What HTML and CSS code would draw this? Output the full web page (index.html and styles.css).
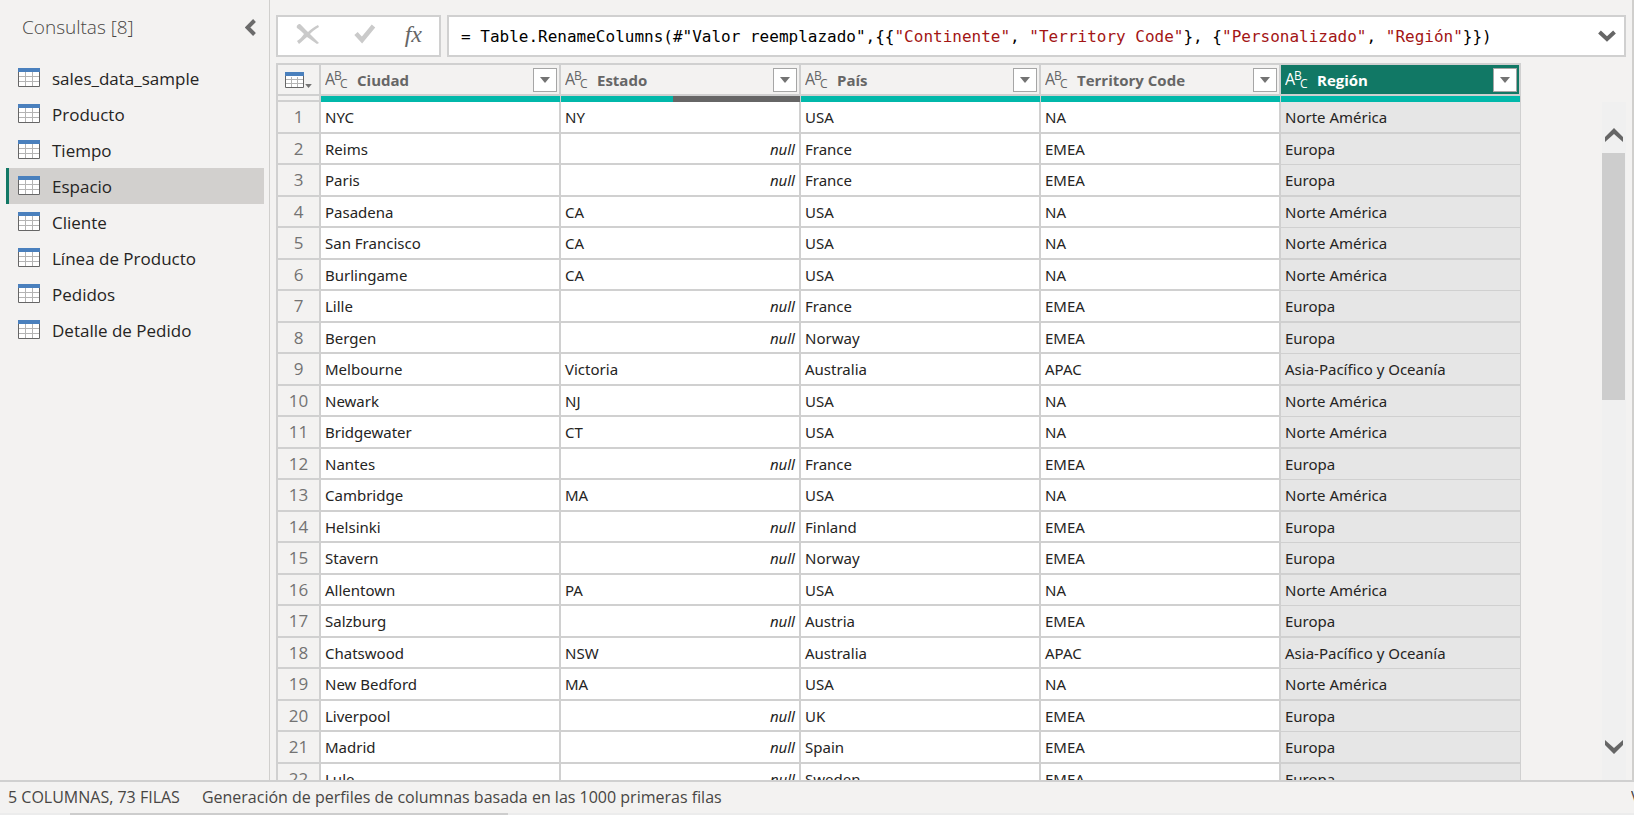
FILE: index.html
```html
<!DOCTYPE html>
<html lang="es">
<head>
<meta charset="utf-8">
<title>Editor de consultas</title>
<link rel="stylesheet" href="styles.css">
</head>
<body>
<svg class="defs" aria-hidden="true">
  <symbol id="table-icon" viewBox="0 0 22 19">
    <path fill="#fff" d="M0 0h22v19H0z"/>
    <path fill="none" stroke="#b4b4b4" d="M7.500 4v14M14.500 4v14M1 8.500h20M1 13.500h20"/>
    <path fill="none" stroke="#666" d="M.5 3.500v15h21v-15"/>
    <path fill="#4a80bd" d="M0 0h22v4H0z"/>
  </symbol>
  <symbol id="table-icon-small" viewBox="0 0 19 16">
    <path fill="#fff" d="M0 0h19v16H0z"/>
    <path fill="none" stroke="#b4b4b4" d="M6.500 5v10M12.500 5v10M1 7.500h17M1 11.500h17"/>
    <path fill="none" stroke="#666" d="M.5 3.500v12h18v-12"/>
    <path fill="#4a80bd" d="M0 0h19v4H0z"/>
  </symbol>
  <symbol id="drop-icon" viewBox="0 0 10 6"><path d="M0 0h10L5 6z"/></symbol>
</svg>
<div class="app">
  <div class="workspace">
    <aside class="sidebar">
      <header class="sidebar-head">
        <h1>Consultas [8]</h1>
        <button class="plain collapse" aria-label="Contraer"><svg width="11" height="17" viewBox="0 0 11 17"><path d="M9.500 1.500 2.500 8.500l7 7" fill="none" stroke="#6b6b6b" stroke-width="4"/></svg></button>
      </header>
      <nav class="queries" id="queries"></nav>
    </aside>
    <main class="main">
      <div class="formula-row">
        <div class="formula-actions">
          <button class="plain" aria-label="Cancelar"><svg width="24" height="21" viewBox="0 0 24 21"><path fill="#cacaca" d="M4 0C7 3 9 5 12 8C15 5 18 3 22 1L23 3C19 5 16 8 14 10C17 13 20 16 23 19L21 20C17 17 14 15 11 13C8 15 6 18 3 20L1 17C4 15 6 13 8 10C6 8 4 6 1 4C0 2 2 0 4 0Z"/></svg></button>
          <button class="plain accept" aria-label="Aceptar"><svg width="22" height="20" viewBox="0 0 22 20"><path d="M2 9.500 8 16 19.500 2" fill="none" stroke="#cacaca" stroke-width="4.500"/></svg></button>
          <button class="plain fx" aria-label="Insertar paso">fx</button>
        </div>
        <div class="formula">
          <code class="formula-text" role="textbox" aria-label="Barra de fórmulas" contenteditable="true" spellcheck="false">= Table.RenameColumns(#"Valor reemplazado",{{<span class="str">"Continente"</span>, <span class="str">"Territory Code"</span>}, {<span class="str">"Personalizado"</span>, <span class="str">"Región"</span>}})</code>
          <button class="plain expand" aria-label="Expandir"><svg width="18" height="12" viewBox="0 0 18 12"><path d="M1.500 2 9 9l7.500-7" fill="none" stroke="#666" stroke-width="4"/></svg></button>
        </div>
      </div>
      <div class="grid-area">
        <div class="grid-clip">
          <table class="grid">
            <colgroup><col class="col-index"><col class="col-data"><col class="col-data"><col class="col-data"><col class="col-data"><col class="col-data"></colgroup>
            <thead>
              <tr class="titles" id="titles"></tr>
              <tr class="quality" id="quality"></tr>
            </thead>
            <tbody id="rows"></tbody>
          </table>
        </div>
        <div class="scrollbar">
          <button class="plain step" aria-label="Subir"><svg width="18" height="14" viewBox="0 0 18 14"><path d="M0 9 9 0l9 9v5L9 6l-9 8z" fill="#666"/></svg></button>
          <div class="track"><div class="thumb"></div></div>
          <button class="plain step" aria-label="Bajar"><svg width="18" height="14" viewBox="0 0 18 14"><path d="M0 5 9 14l9-9V0L9 8 0 0z" fill="#666"/></svg></button>
        </div>
      </div>
    </main>
  </div>
  <footer class="status">
    <span>5 COLUMNAS, 73 FILAS</span>
    <span>Generación de perfiles de columnas basada en las 1000 primeras filas</span>
    <span class="status-end">V</span>
  </footer>
  <div class="hscroll"><div class="hthumb"></div></div>
</div>
<script src="app.js"></script>
</body>
</html>
```
FILE: app.js
```js
const queries = ["sales_data_sample", "Producto", "Tiempo", "Espacio", "Cliente", "Línea de Producto", "Pedidos", "Detalle de Pedido"];
const columns = ["Ciudad", "Estado", "País", "Territory Code", "Región"];
const regions = { NA: "Norte América", EMEA: "Europa", APAC: "Asia-Pacífico y Oceanía" };
const data = [
  ["NYC", "NY", "USA", "NA"],
  ["Reims", null, "France", "EMEA"],
  ["Paris", null, "France", "EMEA"],
  ["Pasadena", "CA", "USA", "NA"],
  ["San Francisco", "CA", "USA", "NA"],
  ["Burlingame", "CA", "USA", "NA"],
  ["Lille", null, "France", "EMEA"],
  ["Bergen", null, "Norway", "EMEA"],
  ["Melbourne", "Victoria", "Australia", "APAC"],
  ["Newark", "NJ", "USA", "NA"],
  ["Bridgewater", "CT", "USA", "NA"],
  ["Nantes", null, "France", "EMEA"],
  ["Cambridge", "MA", "USA", "NA"],
  ["Helsinki", null, "Finland", "EMEA"],
  ["Stavern", null, "Norway", "EMEA"],
  ["Allentown", "PA", "USA", "NA"],
  ["Salzburg", null, "Austria", "EMEA"],
  ["Chatswood", "NSW", "Australia", "APAC"],
  ["New Bedford", "MA", "USA", "NA"],
  ["Liverpool", null, "UK", "EMEA"],
  ["Madrid", null, "Spain", "EMEA"],
  ["Lule", null, "Sweden", "EMEA"]
];

const fill = (id, html) => { document.getElementById(id).innerHTML = html; };

const abcIcon = `<svg class="abc" width="24" height="20" aria-hidden="true"><text class="abc-large" x="0" y="15">A</text><text class="abc-small" x="9" y="10">B</text><text class="abc-small" x="15" y="18">C</text></svg>`;

fill("queries", queries.map(name =>
  `<button class="query${name === "Espacio" ? " selected" : ""}"><svg width="22" height="19"><use href="#table-icon"/></svg><span>${name}</span></button>`
).join(""));

fill("titles",
  `<th class="index"><button class="plain table-menu" aria-label="Tabla"><svg width="19" height="16"><use href="#table-icon-small"/></svg><svg class="menu-arrow" width="7" height="4"><use href="#drop-icon"/></svg></button></th>` +
  columns.map(name =>
    `<th class="${name === "Región" ? "active" : ""}" scope="col"><div class="title">${abcIcon}<span>${name}</span><button class="filter" aria-label="Filtrar ${name}"><svg width="10" height="6"><use href="#drop-icon"/></svg></button></div></th>`
  ).join(""));

fill("quality", `<td class="index"></td>` + columns.map(name =>
  `<td><div class="bar"><div class="valid" style="width:${name === "Estado" ? 47 : 100}%"></div></div></td>`
).join(""));

fill("rows", data.map((row, i) =>
  `<tr><th class="index" scope="row">${i + 1}</th>` +
  [...row, regions[row[3]]].map(value => value === null ? `<td class="null">null</td>` : `<td>${value}</td>`).join("") +
  `</tr>`
).join(""));
```
FILE: styles.css
```css
* { box-sizing: border-box; }
body {
  margin: 0;
  overflow: hidden;
  background: #f3f2f1;
  color: #252423;
  font: 16px/24px "Open Sans", "Noto Sans", sans-serif;
}
button { font: inherit; color: inherit; cursor: pointer; }
svg { display: block; flex: none; }
.defs { position: absolute; width: 0; height: 0; }
.plain { display: flex; align-items: center; justify-content: center; padding: 0; border: 0; background: none; }

.app { display: flex; flex-direction: column; height: 100vh; }
.workspace { display: flex; flex: 1; min-height: 0; border-right: 2px solid #d0cfcd; }

.sidebar { width: 270px; flex: none; padding: 0 5px 0 6px; border-right: 1px solid #d0cfcd; }
.sidebar-head { display: flex; align-items: center; justify-content: space-between; height: 60px; padding: 0 8px 6px 16px; }
.sidebar-head h1 { margin: 0; color: #484644; font-size: 19px; font-weight: 300; }
.queries { display: flex; flex-direction: column; }
.query {
  display: flex;
  align-items: center;
  gap: 12px;
  height: 36px;
  padding: 0 0 0 9px;
  border: 0;
  border-left: 3px solid transparent;
  background: none;
  font-size: 17px;
}
.query svg { margin-bottom: 1px; }
.query span { padding-top: 2px; }
.query.selected { border-color: #117865; background: #d2d0ce; }

.main { display: flex; flex-direction: column; flex: 1; min-width: 0; padding: 15px 6px 0; }
.formula-row { display: flex; gap: 6px; margin-bottom: 6px; }
.formula-actions { display: flex; align-items: center; justify-content: space-between; width: 165px; height: 42px; padding: 0 17px 4px 18px; border: 2px solid #d0d0d0; background: #fff; }
.accept { padding-left: 6px; }
.fx { color: #666; font: italic 24px/28px "Liberation Serif", serif; }
.formula { display: flex; align-items: center; flex: 1; min-width: 0; height: 42px; border: 2px solid #d0d0d0; background: #fff; }
.formula-text { flex: 1; padding: 2px 0 0 12px; overflow: hidden; color: #000; font: 16px/24px "DejaVu Sans Mono", monospace; white-space: pre; outline: 0; }
.str { color: #a31515; }
.expand { width: 34px; height: 34px; }

.grid-area { display: flex; justify-content: space-between; flex: 1; min-height: 0; }
.grid-clip { overflow: hidden; min-width: 0; }
.grid { width: 1245px; table-layout: fixed; border-collapse: separate; border-spacing: 0; border: solid #d0d0d0; border-width: 2px 0 0 2px; }
.col-index { width: 43px; }
.col-data { width: 240px; }
.grid th, .grid td { padding: 0 4px; border: solid #d0d0d0; border-width: 0 2px 2px 0; text-align: left; }
.grid tbody td { height: 32px; background: #fff; font-family: "Noto Sans", "Open Sans", sans-serif; font-size: 15px; line-height: 28px; }
.grid tbody tr:nth-child(even) > * { height: 31px; }
.grid .index { padding: 0; background: #f3f2f1; text-align: center; }
.grid tbody .index { color: #737373; font-size: 17px; font-weight: 400; line-height: 28px; }
.grid tbody td:last-child { border-right-width: 1px; background: #e6e6e6; }
.grid tbody tr:nth-child(even) td:last-child { border-bottom-width: 1px; }
.grid td.null { text-align: right; font-style: italic; }

.titles th { height: 31px; color: #666; font-size: 15px; font-weight: 700; }
.titles th.active { background: #117865; color: #fff; }
.title { display: flex; align-items: center; }
.title span { flex: 1; margin-left: 8px; }
.title .filter { margin-right: -2px; }
.abc { fill: currentColor; }
.abc-large { font-size: 16px; font-weight: 400; }
.abc-small { font-size: 12px; font-weight: 400; }
.filter { display: flex; align-items: center; justify-content: center; width: 24px; height: 24px; padding: 0; border: 1px solid #a6a6a6; background: #fff; }
.filter svg, .menu-arrow { fill: #737373; }
.table-menu { width: 100%; gap: 1px; }
.menu-arrow { align-self: flex-end; }

.grid .quality td { height: 6px; padding: 0; border-width: 0 1px 0 0; line-height: 0; }
.grid .quality .index { border-width: 0 2px 2px 0; }
.bar { height: 6px; background: #666; }
.valid { height: 6px; background: #01b8aa; }

.scrollbar { display: flex; flex-direction: column; flex: none; width: 24px; margin-top: 39px; padding-right: 1px; background: #f0f0f0; }
.step { height: 51px; padding-top: 14px; }
.step:last-child { height: 66px; padding: 0; }
.track { flex: 1; }
.thumb { height: 44%; background: #cdcdcd; }

.status { display: flex; gap: 22px; padding: 3px 0 4px 8px; border-top: 2px solid #d0d0d0; color: #484644; }
.status-end { width: 3px; margin-left: auto; overflow: hidden; }
.hscroll { height: 2px; padding-left: 70px; background: #ececec; }
.hthumb { width: 28%; height: 2px; background: #cdcdcd; }
```
